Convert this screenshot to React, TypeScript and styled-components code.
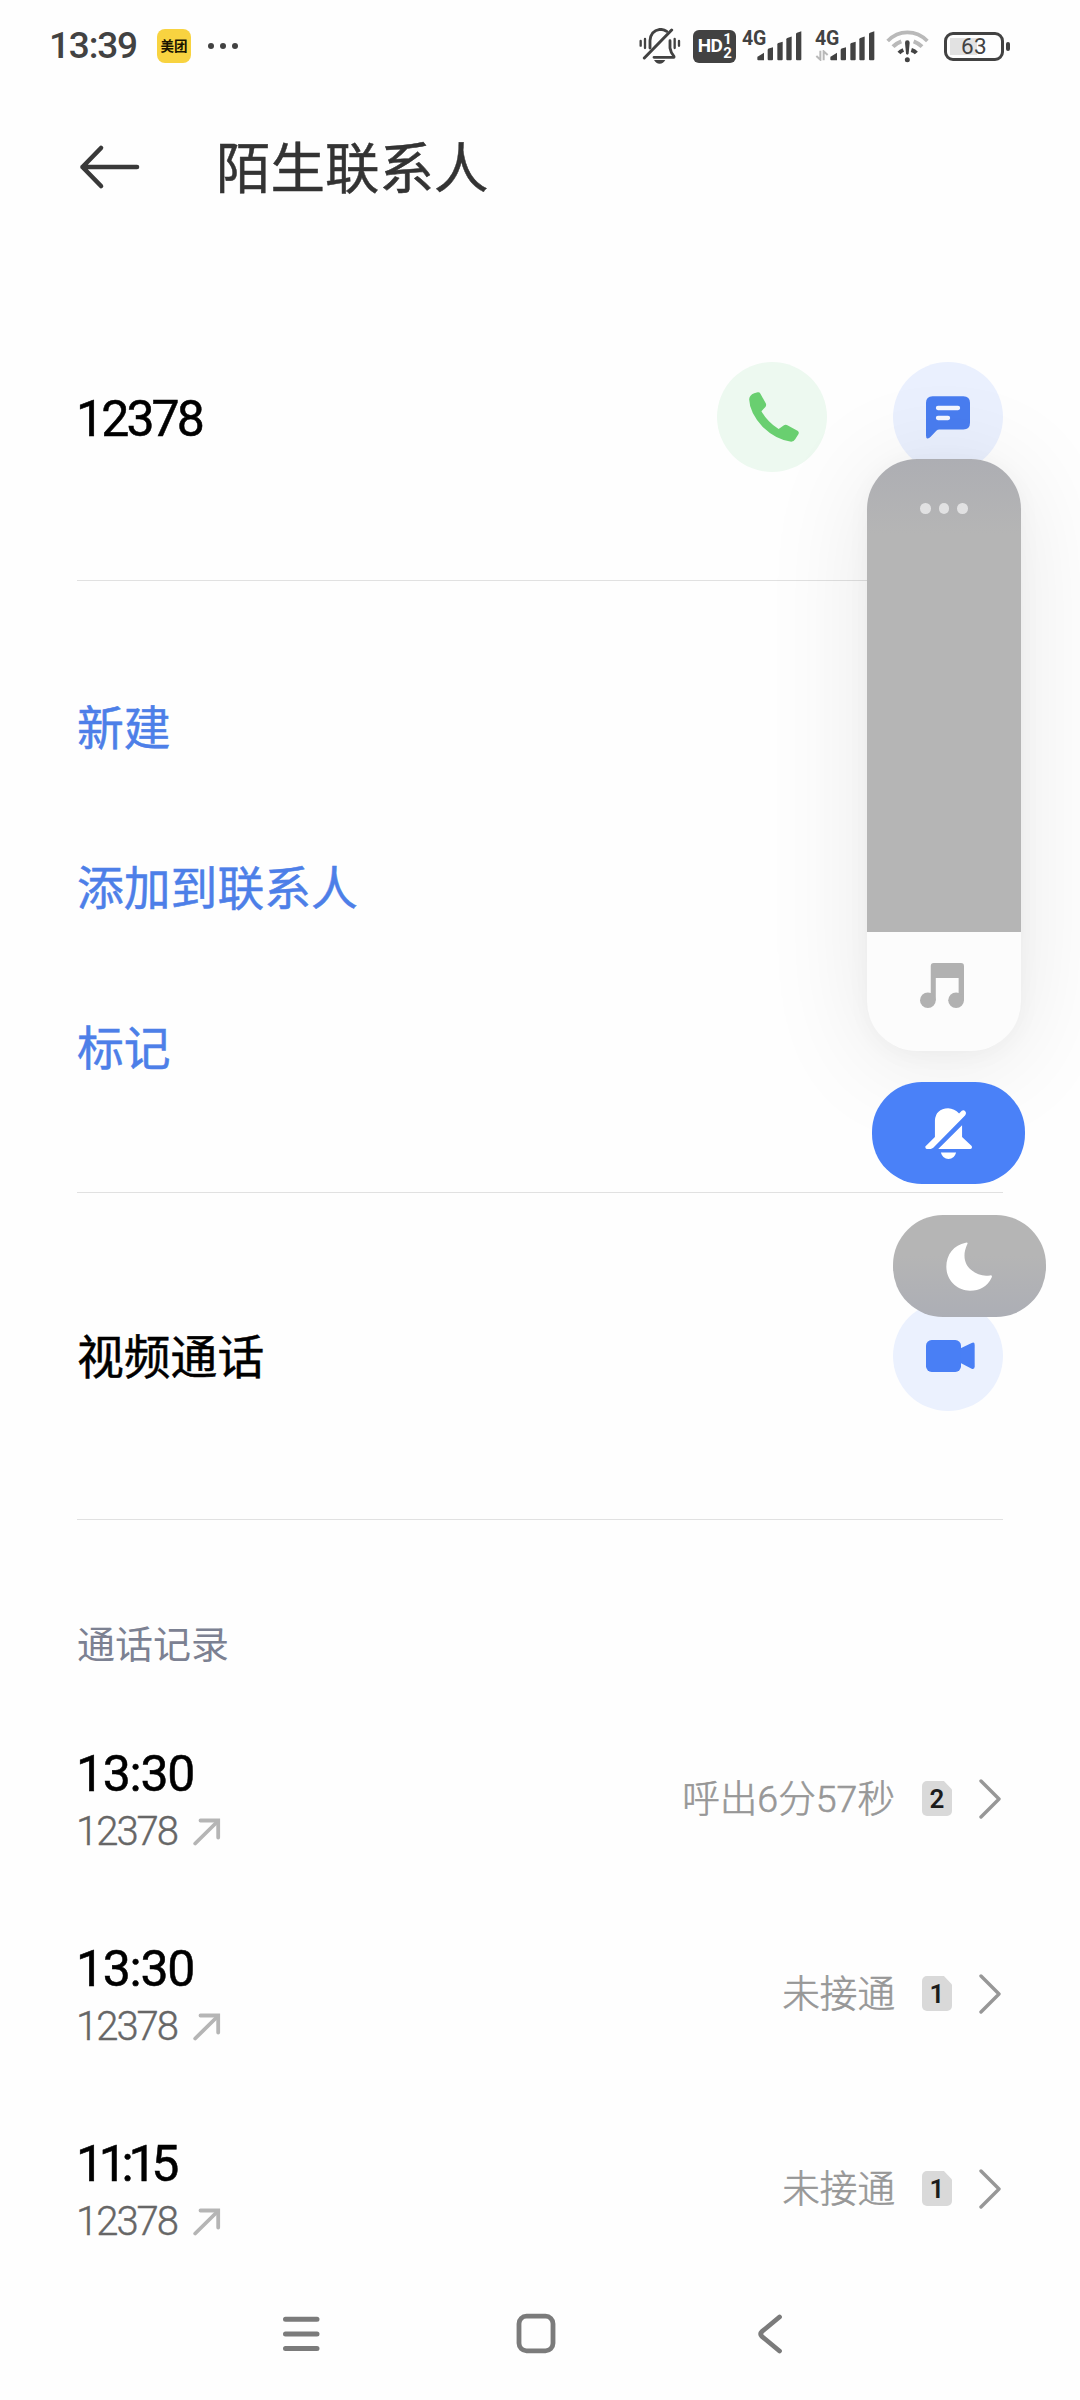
import React from "react";
import styled, { createGlobalStyle } from "styled-components";

const GlobalStyle = createGlobalStyle`
  body {
    margin: 0;
    background: #fefefe;
  }
  * {
    box-sizing: border-box;
  }
`;

const Screen = styled.main`
  position: relative;
  display: flex;
  flex-direction: column;
  width: 1080px;
  height: 2400px;
  overflow: hidden;
  background: #fefefe;
  color: #000;
  font-family: Roboto, "Noto Sans CJK SC", sans-serif;
`;

/* ---------- status bar ---------- */

const StatusBar = styled.header`
  display: flex;
  align-items: center;
  height: 92px;
  padding: 0 70px 0 49px;
  color: #424242;
`;

const Clock = styled.span`
  width: 108px;
  font-size: 37px;
  line-height: 44px;
  font-weight: 500;
  letter-spacing: -1.2px;
`;

const AppBadge = styled.span`
  display: flex;
  align-items: center;
  justify-content: center;
  width: 34px;
  height: 34px;
  border-radius: 8px;
  background: #f8d340;
  color: #1b1500;
  font-size: 13.5px;
  line-height: 16px;
  font-weight: 700;
`;

const MoreDots = styled.span<{ $size: number; $gap: number; $color: string }>`
  display: flex;
  gap: ${(p) => p.$gap}px;
  i {
    width: ${(p) => p.$size}px;
    height: ${(p) => p.$size}px;
    border-radius: 50%;
    background: ${(p) => p.$color};
  }
`;

const StatusDots = styled(MoreDots)`
  margin-left: 17px;
`;

const StatusIcons = styled.div`
  display: flex;
  align-items: center;
  margin-left: auto;
`;

const HdBadge = styled.span`
  display: flex;
  align-items: center;
  justify-content: center;
  gap: 1px;
  width: 43px;
  height: 33px;
  margin-left: 12px;
  border-radius: 6px;
  background: #424242;
  color: #fff;
  font-size: 19px;
  line-height: 20px;
  font-weight: 700;
  letter-spacing: -0.6px;
`;

const HdSims = styled.span`
  display: flex;
  flex-direction: column;
  font-size: 15px;
  line-height: 14px;
`;

const Signal = styled.span`
  display: flex;
  width: 60px;
  height: 33px;
  margin-left: 6px;
  & + & {
    margin-left: 13px;
  }
`;

const SignalLabel = styled.span`
  width: 24px;
  margin-right: -9px;
  font-size: 19.5px;
  line-height: 17px;
  font-weight: 700;
  letter-spacing: -0.3px;
`;

const SignalBars = styled.svg`
  align-self: flex-end;
  flex: none;
  width: 45px;
  height: 30px;
  margin-bottom: 2px;
`;

const DataArrows = styled.svg`
  align-self: flex-end;
  flex: none;
  width: 14px;
  height: 11px;
  margin: 0 -14px 2px -15px;
  & + ${SignalBars} {
    margin-left: 15px;
  }
`;

const Battery = styled.span`
  display: flex;
  align-items: center;
  gap: 2px;
  margin-left: 15px;
`;

const BatteryCase = styled.span`
  display: flex;
  align-items: center;
  justify-content: center;
  width: 60px;
  height: 29px;
  border: 3px solid #424242;
  border-radius: 9px;
  background: linear-gradient(90deg, #e2e2e2 0 27px, transparent 27px) 3px 3px / 48px 17px no-repeat;
  font-size: 22.5px;
  line-height: 24px;
  letter-spacing: 0.4px;
`;

const BatteryNub = styled.span`
  width: 4px;
  height: 9px;
  border-radius: 2px;
  background: #424242;
`;

/* ---------- page ---------- */

const TitleBar = styled.div`
  display: flex;
  align-items: center;
  gap: 74px;
  height: 150px;
  padding-left: 79px;
  color: #333;
`;

const Title = styled.h1`
  margin: 0;
  padding-top: 3px;
  font-size: 54.5px;
  line-height: 64px;
  font-weight: 400;
  -webkit-text-stroke: 0.5px currentColor;
`;

const Content = styled.div`
  display: flex;
  flex-direction: column;
  padding: 12px 77px 0;
`;

const Divider = styled.hr`
  flex: none;
  width: 100%;
  height: 1px;
  margin: 0;
  border: 0;
  background: #e1e1e1;
`;

const ContactRow = styled.section`
  display: flex;
  align-items: center;
  gap: 66px;
  height: 326px;
`;

const RowLabel = styled.span<{ $digits?: boolean }>`
  flex: 1;
  padding-top: 3px;
  margin-left: ${(p) => (p.$digits ? -1 : 0)}px;
  font-size: ${(p) => (p.$digits ? 50 : 46.8)}px;
  line-height: 60px;
  letter-spacing: ${(p) => (p.$digits ? -2.9 : 0)}px;
  -webkit-text-stroke: 0.5px currentColor;
`;

const RoundButton = styled.button<{ $tint: string }>`
  display: flex;
  align-items: center;
  justify-content: center;
  width: 110px;
  height: 110px;
  padding: 0;
  border: 0;
  border-radius: 50%;
  background: ${(p) => p.$tint};
`;

const ActionList = styled.section`
  display: flex;
  flex-direction: column;
  padding: 66px 0 65px;
`;

const ActionLink = styled.a`
  display: flex;
  align-items: center;
  height: 160px;
  padding-top: 3px;
  color: #4d7fe8;
  font-size: 46.8px;
  line-height: 60px;
  -webkit-text-stroke: 0.5px currentColor;
`;

const LogHeading = styled.h2`
  height: 181px;
  margin: 0;
  padding-top: 104px;
  color: #7c8192;
  font-size: 38px;
  line-height: 42px;
  font-weight: 400;
`;

const LogRow = styled.div`
  display: flex;
  align-items: center;
  height: 195px;
`;

const LogMain = styled.div`
  display: flex;
  flex: 1;
  flex-direction: column;
  padding-top: 8px;
`;

const LogTime = styled.span<{ $tracking: number }>`
  margin-left: -1px;
  font-size: 50px;
  line-height: 58px;
  letter-spacing: ${(p) => p.$tracking}px;
  -webkit-text-stroke: 0.5px currentColor;
`;

const LogNumber = styled.span`
  display: flex;
  align-items: center;
  gap: 16px;
  margin-left: -1px;
  color: #666;
  font-size: 40px;
  line-height: 57px;
  font-weight: 300;
  letter-spacing: -2px;
  -webkit-text-stroke: 0.4px currentColor;
`;

const LogStatus = styled.span`
  color: #979797;
  font-size: 37.6px;
  line-height: 46px;
  font-weight: 300;
  -webkit-text-stroke: 0.6px currentColor;
`;

const SimBadge = styled.span`
  display: flex;
  align-items: center;
  justify-content: center;
  width: 30px;
  height: 35px;
  margin: 0 27px;
  border-radius: 5px;
  background: #d9d9d9;
  clip-path: polygon(0 0, 73% 0, 100% 24%, 100% 100%, 0 100%);
  color: #1c1c1c;
  font-size: 26px;
  line-height: 30px;
  font-weight: 600;
`;

const NavBar = styled.nav`
  display: flex;
  justify-content: space-between;
  height: 114px;
  margin-top: auto;
  padding: 27px 297px 0 282px;
`;

/* ---------- floating volume controls ---------- */

const VolumePanel = styled.aside`
  position: absolute;
  left: 867px;
  top: 459px;
  display: flex;
  flex-direction: column;
  width: 154px;
  height: 592px;
  border-radius: 50px;
  background: #fcfcfc;
  box-shadow: 0 4px 24px rgba(0, 0, 0, 0.035), 0 10px 110px rgba(0, 0, 0, 0.09);
  overflow: hidden;
`;

const VolumeLevel = styled.div`
  display: flex;
  justify-content: center;
  height: 473px;
  padding-top: 44px;
  background: linear-gradient(#adaeb3, #b5b5b5 75px);
`;

const VolumeIcon = styled.div`
  display: flex;
  justify-content: center;
  padding: 31px 4px 0 0;
`;

const FloatingPill = styled.button<{ $left: number; $top: number; $fill: string }>`
  position: absolute;
  left: ${(p) => p.$left}px;
  top: ${(p) => p.$top}px;
  display: flex;
  align-items: center;
  justify-content: center;
  width: 153px;
  height: 102px;
  padding: 0;
  border: 0;
  border-radius: 50px;
  background: ${(p) => p.$fill};
`;

/* ---------- icons ---------- */

const VibrateOffIcon = () => (
  <svg width="42" height="36" viewBox="61 54 126 108" fill="none" stroke="#424242" strokeWidth="8.500" strokeLinecap="round">
    <path d="M94 114V92Q96 62 124 58Q136 58 144 64" />
    <path d="M154 92V114Q156 128 166 139V142H106" strokeLinejoin="round" />
    <path d="M159 60L77 144" strokeWidth="9" />
    <path d="M66 93V107M79 87V114M168 87V114M181 93V107" strokeWidth="7" />
    <path d="M106 150H140Q134 161 123 161Q112 161 106 150Z" fill="#424242" stroke="none" />
  </svg>
);

const Bars = () => (
  <SignalBars viewBox="413 65 135 87" preserveAspectRatio="none" fill="#424242">
    <path d="M417 138L434 128V150H417Q414 150 414 147V142Z" />
    <path d="M445 120Q445 117 448 116L461 112V147Q461 150 458 150H448Q445 150 445 147Z" />
    <path d="M474 104Q474 101 477 100L490 96V147Q490 150 487 150H477Q474 150 474 147Z" />
    <path d="M501 89Q501 86 504 85L517 81V147Q517 150 514 150H504Q501 150 501 147Z" />
    <path d="M530 74Q530 71 533 70L546 66V147Q546 150 543 150H533Q530 150 530 147Z" />
  </SignalBars>
);

const DataActivity = () => (
  <DataArrows viewBox="582 118 42 33" fill="none" stroke="#b9b9b9" strokeWidth="6">
    <path d="M598 120V147L586 136M608 149V122L620 133" />
  </DataArrows>
);

const WifiAlertIcon = () => (
  <svg width="43" height="33" viewBox="802 58 129 99" fill="none" strokeLinecap="butt" style={{ marginLeft: 11 }}>
    <path d="M807 91Q832 65 866 65Q901 65 926 91" stroke="#b9b9b9" strokeWidth="11" />
    <path d="M823 108Q832 98 848 92M885 92Q900 98 910 108" stroke="#b9b9b9" strokeWidth="12" />
    <path d="M841 127Q846 121 854 118M878 118Q888 121 893 127" stroke="#424242" strokeWidth="12" />
    <path d="M859 96Q859 89 866 89Q873 89 873 96L870 128Q869 132 866 132Q863 132 862 128Z" fill="#424242" />
    <circle cx="866" cy="147" r="7.5" fill="#424242" />
  </svg>
);

const BackArrowIcon = () => (
  <svg width="63" height="46" viewBox="0 0 63 46" fill="none" stroke="#393939" strokeWidth="4.6" strokeLinecap="round" strokeLinejoin="round">
    <path d="M22 4L3.5 23L22 42M3.5 23H58" />
  </svg>
);

const PhoneIcon = () => (
  <svg width="50" height="50" viewBox="207 156 150 151" fill="#69cf70" style={{ marginLeft: 3 }}>
    <path d="M222 160L233 157Q238 156 241 161L257 190Q260 196 256 201L244 214Q262 246 296 268L311 257Q316 253 321 256L353 273Q359 277 356 283L346 299Q342 306 334 306Q290 302 248 262Q208 218 207 178Q208 166 222 160Z" />
  </svg>
);

const MessageIcon = () => (
  <svg width="44" height="43" viewBox="738 170 132 128">
    <path d="M758 170H850Q870 170 870 190V250Q870 270 850 270H778Q773 270 769 274L752 292Q746 298 742 297Q738 296 738 288V190Q738 170 758 170Z" fill="#497df0" />
    <path d="M774 205.500H834M774 235.500H804" stroke="#f4f7ff" strokeWidth="13" strokeLinecap="round" />
  </svg>
);

const VideoIcon = () => (
  <svg width="49" height="32" viewBox="498 1289 147 89" preserveAspectRatio="none" fill="#497ff5" style={{ marginLeft: 5 }}>
    <rect x="498" y="1289" width="105" height="89" rx="17" ry="16" />
    <path d="M602 1312L635 1297Q644 1293 644 1302V1363Q644 1372 635 1369L602 1353Z" />
  </svg>
);

const NoteIcon = () => (
  <svg width="44" height="45" viewBox="480 232 131 124" preserveAspectRatio="none" fill="#b1b1b1">
    <path d="M521 232H602Q611 232 611 241V334H595V273H527V334H512V241Q512 232 521 232Z" />
    <ellipse cx="503.500" cy="334.500" rx="23.500" ry="21.500" />
    <ellipse cx="587.500" cy="334.500" rx="23.500" ry="21.500" />
  </svg>
);

const BellOffIcon = () => (
  <svg width="47" height="51" viewBox="494 635 142 142" preserveAspectRatio="none" fill="#fff">
    <path d="M524 670Q526 638 564 636Q583 637 597 650L605 643Q611 639 616 645Q620 650 615 656L519 746Q515 749 511 749H499Q494 748 495 742L524 716Z" />
    <path d="M606 683V716L635 741Q638 749 631 749H534Z" />
    <path d="M542 759H588Q583 777 565 777Q547 777 542 759Z" />
  </svg>
);

const MoonIcon = () => (
  <svg width="46" height="49" viewBox="559 1010 138 138" preserveAspectRatio="none" fill="#fff" style={{ marginRight: 1 }}>
    <path d="M618 1012Q627 1010 622 1018C607 1050 616 1074 635 1089C652 1103 672 1107 691 1104Q699 1103 696 1110C683 1136 660 1147 631 1147C592 1147 560 1117 560 1080C560 1045 583 1018 618 1012Z" />
  </svg>
);

const OutgoingIcon = () => (
  <svg width="28" height="28" viewBox="0 0 28 28" fill="none" stroke="#b5b5b5" strokeWidth="3.800" strokeLinecap="round">
    <path d="M2.200 25.500L24.500 3.500" />
    <path d="M7.500 2.500H25.200V19.500" />
  </svg>
);

const ChevronIcon = () => (
  <svg width="24" height="40" viewBox="0 0 24 40" fill="none" stroke="#979797" strokeWidth="3.400" strokeLinecap="round" strokeLinejoin="round">
    <path d="M2 2L20 20L2 38" />
  </svg>
);

const MenuIcon = () => (
  <svg width="38" height="42" viewBox="0 0 38 42" stroke="#7b7b7b" strokeWidth="5" strokeLinecap="round">
    <path d="M3.500 6.300H35M3.500 21H35M3.500 35.600H35" />
  </svg>
);

const HomeIcon = () => (
  <svg width="40" height="42" viewBox="0 0 40 42" fill="none" stroke="#7b7b7b" strokeWidth="4.800" style={{ marginRight: 6 }}>
    <rect x="3" y="3.200" width="34" height="34.600" rx="7.500" />
  </svg>
);

const NavBackIcon = () => (
  <svg width="26" height="42" viewBox="0 0 26 42" fill="none" stroke="#7b7b7b" strokeWidth="4.800" strokeLinecap="round">
    <path d="M22.500 4L5 18.500Q2.500 21 5 23.500L22.500 38" />
  </svg>
);

const calls = [
  { time: "13:30", tracking: -1.3, number: "12378", status: "呼出6分57秒", sim: 2 },
  { time: "13:30", tracking: -1.3, number: "12378", status: "未接通", sim: 1 },
  { time: "11:15", tracking: -5.3, number: "12378", status: "未接通", sim: 1 },
];

export default function App() {
  return (
    <Screen>
      <GlobalStyle />
      <StatusBar>
        <Clock>13:39</Clock>
        <AppBadge>美团</AppBadge>
        <StatusDots $size={6} $gap={6} $color="#424242">
          <i />
          <i />
          <i />
        </StatusDots>
        <StatusIcons>
          <VibrateOffIcon />
          <HdBadge>
            HD
            <HdSims>
              <span>1</span>
              <span>2</span>
            </HdSims>
          </HdBadge>
          <Signal>
            <SignalLabel>4G</SignalLabel>
            <Bars />
          </Signal>
          <Signal>
            <SignalLabel>4G</SignalLabel>
            <DataActivity />
            <Bars />
          </Signal>
          <WifiAlertIcon />
          <Battery>
            <BatteryCase>63</BatteryCase>
            <BatteryNub />
          </Battery>
        </StatusIcons>
      </StatusBar>

      <TitleBar>
        <BackArrowIcon />
        <Title>陌生联系人</Title>
      </TitleBar>

      <Content>
        <ContactRow>
          <RowLabel $digits>12378</RowLabel>
          <RoundButton $tint="#edf9f0">
            <PhoneIcon />
          </RoundButton>
          <RoundButton $tint="#eaf0fe">
            <MessageIcon />
          </RoundButton>
        </ContactRow>
        <Divider />
        <ActionList>
          <ActionLink>新建</ActionLink>
          <ActionLink>添加到联系人</ActionLink>
          <ActionLink>标记</ActionLink>
        </ActionList>
        <Divider />
        <ContactRow>
          <RowLabel>视频通话</RowLabel>
          <RoundButton $tint="#ebf1fe">
            <VideoIcon />
          </RoundButton>
        </ContactRow>
        <Divider />
        <LogHeading>通话记录</LogHeading>
        {calls.map((call, index) => (
          <LogRow key={index}>
            <LogMain>
              <LogTime $tracking={call.tracking}>{call.time}</LogTime>
              <LogNumber>
                {call.number}
                <OutgoingIcon />
              </LogNumber>
            </LogMain>
            <LogStatus>{call.status}</LogStatus>
            <SimBadge>{call.sim}</SimBadge>
            <ChevronIcon />
          </LogRow>
        ))}
      </Content>

      <NavBar>
        <MenuIcon />
        <HomeIcon />
        <NavBackIcon />
      </NavBar>

      <VolumePanel>
        <VolumeLevel>
          <MoreDots $size={10.5} $gap={7.8} $color="#e1e1e2">
            <i />
            <i />
            <i />
          </MoreDots>
        </VolumeLevel>
        <VolumeIcon>
          <NoteIcon />
        </VolumeIcon>
      </VolumePanel>
      <FloatingPill $left={872} $top={1082} $fill="#4a81f8">
        <BellOffIcon />
      </FloatingPill>
      <FloatingPill $left={893} $top={1215} $fill="linear-gradient(#b5b5b5 40%, #acaeb5)">
        <MoonIcon />
      </FloatingPill>
    </Screen>
  );
}
